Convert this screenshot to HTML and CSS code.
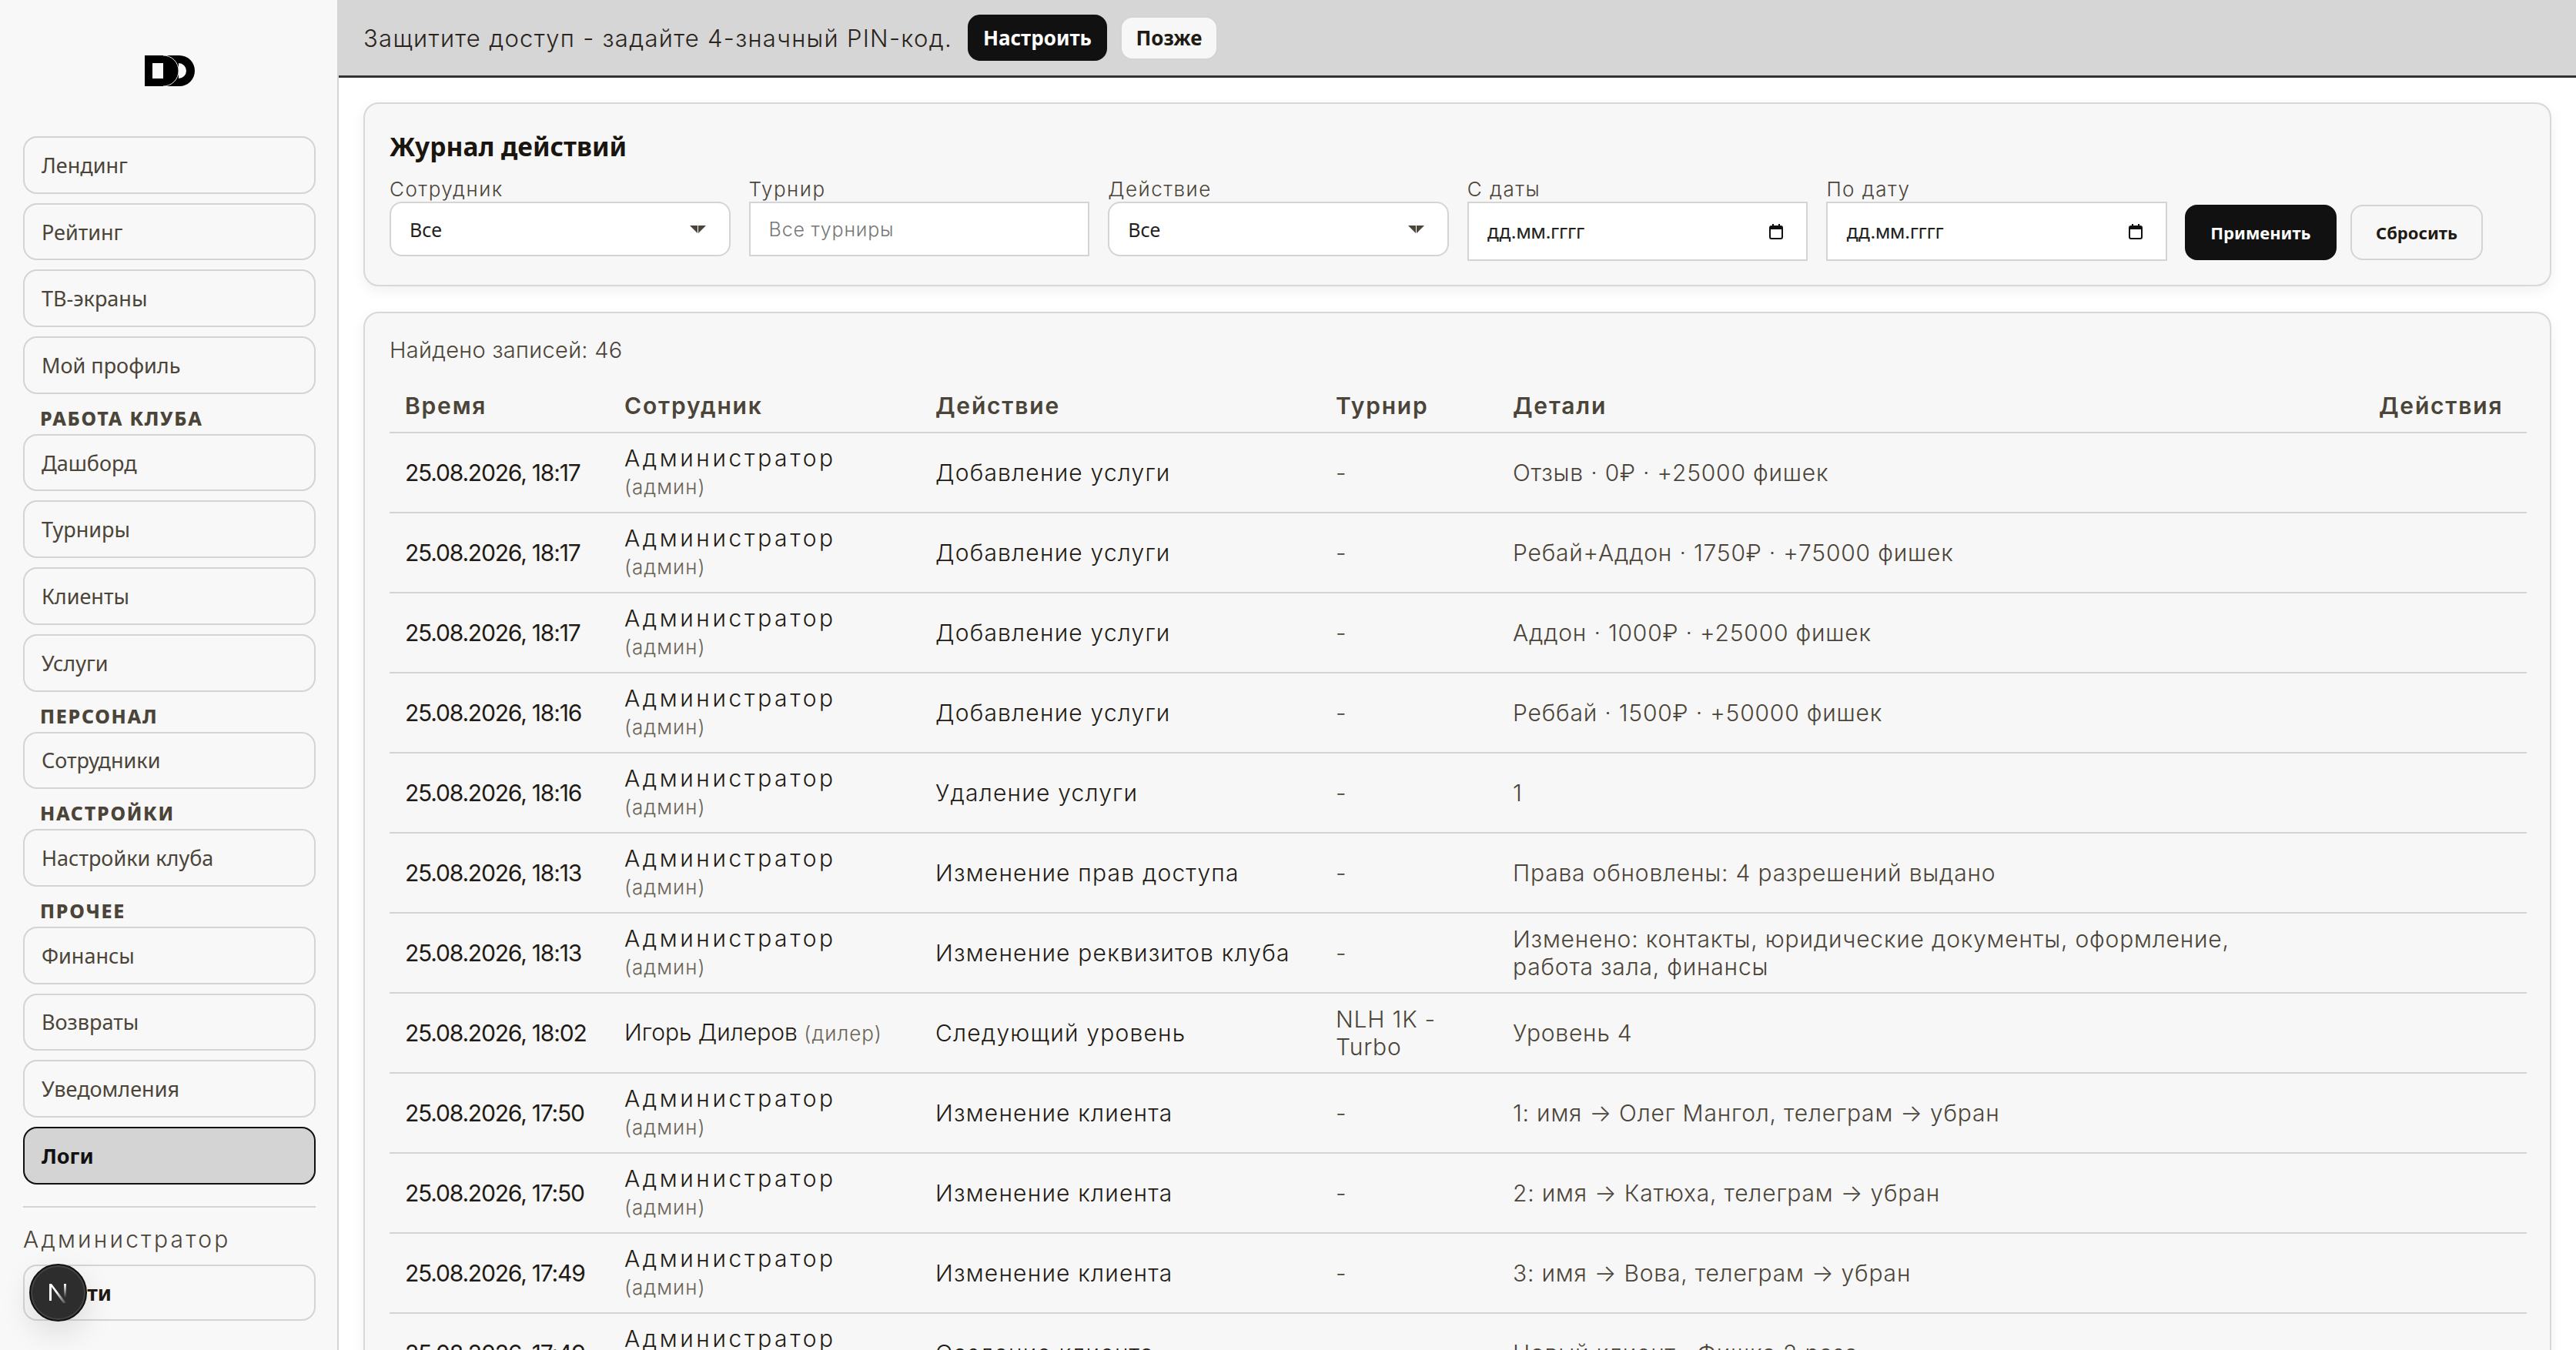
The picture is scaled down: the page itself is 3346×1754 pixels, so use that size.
FILE: index.html
```html
<!DOCTYPE html>
<html lang="ru">
<head>
  <meta charset="UTF-8">
  <title>Журнал действий</title>
  <link rel="stylesheet" href="styles.css">
</head>
<body>
  <div class="layout">
    <aside class="sidebar">
      <div class="logo">
        <svg width="65" height="40" viewBox="0 0 65 40">
          <path d="M24 0h21a20 20 0 0 1 0 40H24zM44 10a10 10 0 0 1 0 20z" fill="#000" fill-rule="evenodd"/>
          <path d="M0 0h24a20 20 0 0 1 0 40H0zM10 10v20h16a10 10 0 0 0 0-20z" fill="#000" fill-rule="evenodd"/>
          <path d="M24 0a20 20 0 0 1 0 40" fill="none" stroke="#e8e8e8" stroke-width="1"/>
        </svg>
      </div>
      <nav class="nav">
        <a class="nav-item">Лендинг</a>
        <a class="nav-item">Рейтинг</a>
        <a class="nav-item">ТВ-экраны</a>
        <a class="nav-item">Мой профиль</a>
        <div class="nav-title">Работа клуба</div>
        <a class="nav-item">Дашборд</a>
        <a class="nav-item">Турниры</a>
        <a class="nav-item">Клиенты</a>
        <a class="nav-item">Услуги</a>
        <div class="nav-title">Персонал</div>
        <a class="nav-item">Сотрудники</a>
        <div class="nav-title">Настройки</div>
        <a class="nav-item">Настройки клуба</a>
        <div class="nav-title">Прочее</div>
        <a class="nav-item">Финансы</a>
        <a class="nav-item">Возвраты</a>
        <a class="nav-item">Уведомления</a>
        <a class="nav-item active">Логи</a>
      </nav>
      <div class="side-user">
        <div class="side-name">Администратор</div>
        <a class="nav-item logout">Выйти</a>
      </div>
    </aside>

    <div class="content">
      <div class="pin-banner">
        <span class="pin-text">Защитите доступ - задайте 4-значный PIN-код.</span>
        <button class="btn btn-dark btn-setup">Настроить</button>
        <button class="btn btn-light btn-later">Позже</button>
      </div>

      <main class="main">
        <section class="card filters-card">
          <h1 class="page-title">Журнал действий</h1>
          <div class="filters">
            <div class="field">
              <label>Сотрудник</label>
              <div class="control select">Все <svg width="21" height="10" viewBox="0 0 21 10"><path d="M0 0h10v10zM11 0h10L11 10z" fill="#4b4438"/></svg></div>
            </div>
            <div class="field">
              <label>Турнир</label>
              <div class="control placeholder">Все турниры</div>
            </div>
            <div class="field">
              <label>Действие</label>
              <div class="control select">Все <svg width="21" height="10" viewBox="0 0 21 10"><path d="M0 0h10v10zM11 0h10L11 10z" fill="#4b4438"/></svg></div>
            </div>
            <div class="field">
              <label>С даты</label>
              <div class="control date">дд.мм.гггг <svg width="18" height="20" viewBox="0 0 18 20"><rect x="1" y="3" width="16" height="16" rx="2" fill="none" stroke="#111" stroke-width="2"/><path d="M1 4h16v3H1zM4 0h2v4H4zM12 0h2v4h-2z" fill="#111"/></svg></div>
            </div>
            <div class="field">
              <label>По дату</label>
              <div class="control date">дд.мм.гггг <svg width="18" height="20" viewBox="0 0 18 20"><rect x="1" y="3" width="16" height="16" rx="2" fill="none" stroke="#111" stroke-width="2"/><path d="M1 4h16v3H1zM4 0h2v4H4zM12 0h2v4h-2z" fill="#111"/></svg></div>
            </div>
            <button class="btn btn-dark btn-apply">Применить</button>
            <button class="btn btn-light btn-reset">Сбросить</button>
          </div>
        </section>

        <section class="card table-card">
          <div class="found">Найдено записей: 46</div>
          <table class="log-table">
            <colgroup>
              <col class="c-time"><col class="c-user"><col class="c-action"><col class="c-tour"><col class="c-details"><col class="c-ops">
            </colgroup>
            <thead>
              <tr><th>Время</th><th>Сотрудник</th><th>Действие</th><th>Турнир</th><th>Детали</th><th>Действия</th></tr>
            </thead>
            <tbody>
              <tr><td class="time">25.08.2026, 18:17</td><td><span class="admin">Администратор</span> <span class="role">(админ)</span></td><td class="act">Добавление услуги</td><td class="muted">-</td><td class="muted">Отзыв · 0₽ · +25000 фишек</td><td></td></tr>
              <tr><td class="time">25.08.2026, 18:17</td><td><span class="admin">Администратор</span> <span class="role">(админ)</span></td><td class="act">Добавление услуги</td><td class="muted">-</td><td class="muted">Ребай+Аддон · 1750₽ · +75000 фишек</td><td></td></tr>
              <tr><td class="time">25.08.2026, 18:17</td><td><span class="admin">Администратор</span> <span class="role">(админ)</span></td><td class="act">Добавление услуги</td><td class="muted">-</td><td class="muted">Аддон · 1000₽ · +25000 фишек</td><td></td></tr>
              <tr><td class="time">25.08.2026, 18:16</td><td><span class="admin">Администратор</span> <span class="role">(админ)</span></td><td class="act">Добавление услуги</td><td class="muted">-</td><td class="muted">Реббай · 1500₽ · +50000 фишек</td><td></td></tr>
              <tr><td class="time">25.08.2026, 18:16</td><td><span class="admin">Администратор</span> <span class="role">(админ)</span></td><td class="act">Удаление услуги</td><td class="muted">-</td><td class="muted">1</td><td></td></tr>
              <tr><td class="time">25.08.2026, 18:13</td><td><span class="admin">Администратор</span> <span class="role">(админ)</span></td><td class="act">Изменение прав доступа</td><td class="muted">-</td><td class="muted">Права обновлены: 4 разрешений выдано</td><td></td></tr>
              <tr><td class="time">25.08.2026, 18:13</td><td><span class="admin">Администратор</span> <span class="role">(админ)</span></td><td class="act">Изменение реквизитов клуба</td><td class="muted">-</td><td class="muted">Изменено: контакты, юридические документы, оформление,<br>работа зала, финансы</td><td></td></tr>
              <tr><td class="time">25.08.2026, 18:02</td><td>Игорь Дилеров <span class="role">(дилер)</span></td><td class="act">Следующий уровень</td><td class="muted">NLH 1K - Turbo</td><td class="muted">Уровень 4</td><td></td></tr>
              <tr><td class="time">25.08.2026, 17:50</td><td><span class="admin">Администратор</span> <span class="role">(админ)</span></td><td class="act">Изменение клиента</td><td class="muted">-</td><td class="muted">1: имя → Олег Мангол, телеграм → убран</td><td></td></tr>
              <tr><td class="time">25.08.2026, 17:50</td><td><span class="admin">Администратор</span> <span class="role">(админ)</span></td><td class="act">Изменение клиента</td><td class="muted">-</td><td class="muted">2: имя → Катюха, телеграм → убран</td><td></td></tr>
              <tr><td class="time">25.08.2026, 17:49</td><td><span class="admin">Администратор</span> <span class="role">(админ)</span></td><td class="act">Изменение клиента</td><td class="muted">-</td><td class="muted">3: имя → Вова, телеграм → убран</td><td></td></tr>
              <tr><td class="time">25.08.2026, 17:49</td><td><span class="admin">Администратор</span> <span class="role">(админ)</span></td><td class="act">Создание клиента</td><td class="muted">-</td><td class="muted">Новый клиент · Фишка 2 раза</td><td></td></tr>
            </tbody>
          </table>
        </section>
      </main>
    </div>
  </div>

  <div class="dev-badge">
    <svg width="26" height="26" viewBox="0 0 26 26">
      <defs>
        <linearGradient id="nFade" x1="0" y1="0" x2="0" y2="1">
          <stop offset="0" stop-color="#fff"/>
          <stop offset="1" stop-color="#fff" stop-opacity="0"/>
        </linearGradient>
        <linearGradient id="nDiag" x1="0" y1="0" x2="1" y2="1">
          <stop offset="0.4" stop-color="#fff"/>
          <stop offset="1" stop-color="#fff" stop-opacity="0.1"/>
        </linearGradient>
      </defs>
      <path d="M1 1h3v22H1z" fill="#fff"/>
      <path d="M1 1h3l19 25h-4z" fill="url(#nDiag)"/>
      <path d="M20 1h3v18h-3z" fill="url(#nFade)"/>
    </svg>
  </div>
</body>
</html>
```

FILE: styles.css
```css
* {
  box-sizing: border-box;
}
html, body {
  margin: 0;
  height: 100%;
  overflow: hidden;
}
body {
  font-family: Inter, "Noto Sans", sans-serif;
  font-weight: 300;
  font-size: 30px;
  color: #1f1a14;
  background: #fff;
}
.layout {
  display: flex;
  height: 1754px;
}
.sidebar {
  width: 440px;
  flex-shrink: 0;
  background: #f8f8f8;
  border-right: 2px solid #d4d4d4;
  padding: 0 28px 0 30px;
}
.logo {
  height: 177px;
  display: flex;
  justify-content: center;
  padding-top: 72px;
}
.logo svg {
  display: block;
}
.nav {
  display: flex;
  flex-direction: column;
  gap: 12px;
}
.nav-item {
  display: flex;
  align-items: center;
  height: 74.700px;
  padding: 0 22px;
  border: 2px solid #d4d4d4;
  border-radius: 18px;
  font-family: "Noto Sans", sans-serif;
  font-weight: 400;
  font-size: 27px;
  color: #4b4438;
}
.nav-item.active {
  background: #d4d4d4;
  border-color: #111;
  color: #111;
  font-weight: 700;
}
.nav-title {
  height: 28px;
  margin: 5px 0 -5px;
  padding-left: 22px;
  font-family: "Noto Sans", sans-serif;
  font-size: 25px;
  line-height: 28px;
  font-weight: 800;
  letter-spacing: 1.700px;
  text-transform: uppercase;
  color: #4b4438;
}
.side-user {
  margin-top: 28px;
  border-top: 2px solid #d4d4d4;
  padding-top: 23px;
}
.side-name {
  font-size: 30px;
  line-height: 36px;
  letter-spacing: 3.200px;
  color: #4b4438;
  margin-bottom: 15px;
}
.logout {
  height: 73px;
  font-weight: 700;
  color: #1f1a14;
}
.content {
  flex: 1;
  min-width: 0;
}
.pin-banner {
  display: flex;
  align-items: center;
  height: 101px;
  padding: 0 32px;
  gap: 17px;
  background: #d6d6d6;
  border-bottom: 3px solid #333;
}
.pin-text {
  font-size: 31px;
  letter-spacing: 1.300px;
  color: #2a241c;
  margin-right: 3px;
}
.btn {
  border-radius: 16px;
  font-family: "Noto Sans", sans-serif;
  font-weight: 700;
  padding: 0;
}
.btn-dark {
  background: #111;
  border: 2px solid #111;
  color: #fff;
}
.btn-light {
  background: #f7f7f7;
  border: 2px solid #d4d4d4;
  color: #1f1a14;
}
.btn-setup {
  width: 181px;
  height: 60px;
  font-size: 26px;
}
.btn-later {
  width: 127px;
  height: 57px;
  font-size: 26px;
}
.main {
  padding: 32px;
  display: flex;
  flex-direction: column;
  gap: 33px;
}
.card {
  background: #f7f7f7;
  border: 2px solid #d8d8d8;
  border-radius: 20px;
  box-shadow: 0 6px 18px rgba(0, 0, 0, 0.06);
  padding: 32px;
}
.filters-card {
  height: 239px;
  padding-top: 32px;
}
.page-title {
  margin: 0;
  font-family: "Noto Sans", sans-serif;
  font-size: 33.500px;
  line-height: 46px;
  font-weight: 700;
  color: #1a150f;
}
.filters {
  display: flex;
  align-items: flex-start;
  gap: 24px;
  margin-top: 17px;
}
.field {
  width: 442.600px;
  display: flex;
  flex-direction: column;
}
.field label {
  font-size: 26px;
  line-height: 32px;
  letter-spacing: 1.500px;
  color: #4b4438;
}
.control {
  display: flex;
  align-items: center;
  justify-content: space-between;
  height: 71px;
  padding: 0 30px 0 24px;
  background: #fff;
  border: 2px solid #d4d4d4;
  border-radius: 16px;
  font-family: "Noto Sans", sans-serif;
  font-weight: 400;
  font-size: 25px;
  color: #222;
}
.control.placeholder {
  border-radius: 0;
  font-family: Inter, sans-serif;
  font-weight: 300;
  letter-spacing: 0.800px;
  color: #777;
}
.control.date {
  height: 77px;
  border-radius: 0;
  padding: 0 30px 0 24px;
  font-family: Inter, sans-serif;
  font-weight: 400;
  letter-spacing: -0.300px;
}
.btn-apply {
  width: 197px;
  height: 72px;
  font-size: 22px;
  margin: 36px 0 0 -1px;
}
.btn-reset {
  width: 172px;
  height: 72px;
  font-size: 22px;
  margin: 36px 0 0 -6px;
}
.table-card {
  padding-top: 28px;
}
.found {
  font-size: 29px;
  line-height: 40px;
  letter-spacing: 0.300px;
  color: #4b4438;
}
.log-table {
  width: 2776px;
  table-layout: fixed;
  border-collapse: collapse;
  margin-top: 17px;
}
.c-time { width: 285px; }
.c-user { width: 404px; }
.c-action { width: 520px; }
.c-tour { width: 230px; }
.c-details { width: 1125px; }
.c-ops { width: 212px; }
.log-table th {
  height: 70px;
  padding: 0 20px;
  text-align: left;
  font-size: 30px;
  font-weight: 600;
  letter-spacing: 1.800px;
  color: #4b4438;
  border-bottom: 2px solid #d4d4d4;
}
.log-table td {
  height: 104px;
  padding: 0 20px;
  font-size: 30px;
  line-height: 36px;
  color: #1f1a14;
  border-bottom: 2px solid #d4d4d4;
}
.log-table td.time {
  letter-spacing: -1.200px;
  font-weight: 400;
}
.log-table td.act {
  letter-spacing: 1.200px;
}
.log-table td.muted {
  letter-spacing: 0.800px;
  color: #4b4438;
}
.admin {
  letter-spacing: 3.600px;
}
.role {
  font-size: 26px;
  letter-spacing: 1px;
  color: #6a6358;
}
.dev-badge {
  position: fixed;
  left: 38px;
  top: 1642px;
  width: 75px;
  height: 75px;
  border-radius: 50%;
  background: #2d2d2d;
  border: 2px solid #111;
  box-shadow: inset 0 0 0 2px #444, 0 14px 40px rgba(0, 0, 0, 0.12);
  display: flex;
  align-items: center;
  justify-content: center;
}
```
